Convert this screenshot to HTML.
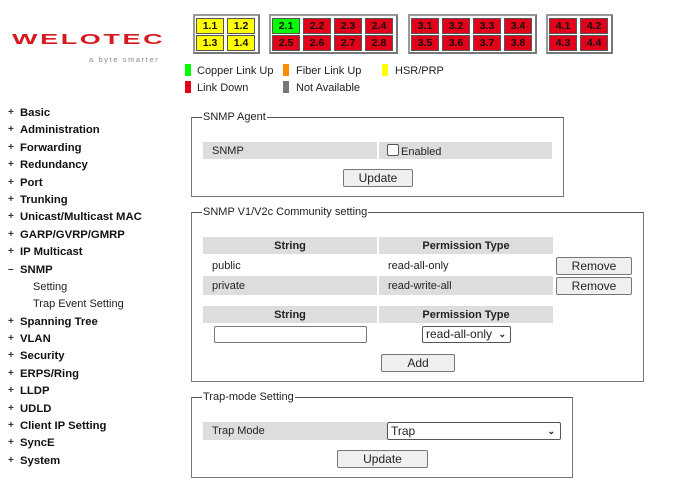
<!DOCTYPE html><html><head><style>
body{margin:0;width:680px;height:486px;background:#fff;font-family:"Liberation Sans",Arial,sans-serif;font-size:11px;color:#222;position:relative;overflow:hidden}
.a{position:absolute}
.grp{position:absolute;border:2px solid #999;border-right-color:#777;border-bottom-color:#777;background:#fff;height:36px;top:14px}
.c{position:absolute;width:26px;height:14px;border:1px solid #555;font-size:10.5px;font-weight:bold;text-align:center;line-height:14px;color:#111}
.y{background:#ffff00}.r{background:#e2001a}.g{background:#00ff00}
.sq{position:absolute;width:6px;height:12px}
.nav{position:absolute;left:0;font-weight:bold;font-size:11.3px;color:#111;margin-top:2px}
.nav span{position:absolute;left:8px;color:#333;font-size:10px}
.nav b{position:absolute;left:20px;white-space:nowrap}
fieldset{position:absolute;margin:0;padding:0;border:1px solid #777;border-top-color:#555}
legend{position:absolute;top:-7px;left:10px;background:#fff;padding:0 1px;font-size:11px;line-height:13px}
.gray{position:absolute;background:#ddd}
.btn{position:absolute;border:1px solid #777;border-radius:2px;background:#efefef;text-align:center;font-size:12px;box-sizing:border-box}
.sel{position:absolute;border:1px solid #555;border-radius:2px;background:#fff;font-size:12px;box-sizing:border-box;padding-left:3px}
</style></head><body>
<div class="a" style="left:12px;top:31px;font-size:27px;font-weight:bold;color:#d71920;letter-spacing:2.6px;transform:scaleY(0.55);transform-origin:0 0;">WELOTEC</div>
<div class="a" style="left:89px;top:55px;font-size:7.5px;color:#888;letter-spacing:1.6px">a byte smarter</div>

<div class="grp" style="left:193px;width:63px"></div>
<div class="c y" style="left:196px;top:18px">1.1</div><div class="c y" style="left:227px;top:18px">1.2</div>
<div class="c y" style="left:196px;top:35px">1.3</div><div class="c y" style="left:227px;top:35px">1.4</div>
<div class="grp" style="left:269px;width:125px"></div>
<div class="c g" style="left:272px;top:18px">2.1</div><div class="c r" style="left:303px;top:18px">2.2</div><div class="c r" style="left:334px;top:18px">2.3</div><div class="c r" style="left:365px;top:18px">2.4</div>
<div class="c r" style="left:272px;top:35px">2.5</div><div class="c r" style="left:303px;top:35px">2.6</div><div class="c r" style="left:334px;top:35px">2.7</div><div class="c r" style="left:365px;top:35px">2.8</div>
<div class="grp" style="left:408px;width:125px"></div>
<div class="c r" style="left:411px;top:18px">3.1</div><div class="c r" style="left:442px;top:18px">3.2</div><div class="c r" style="left:473px;top:18px">3.3</div><div class="c r" style="left:504px;top:18px">3.4</div>
<div class="c r" style="left:411px;top:35px">3.5</div><div class="c r" style="left:442px;top:35px">3.6</div><div class="c r" style="left:473px;top:35px">3.7</div><div class="c r" style="left:504px;top:35px">3.8</div>
<div class="grp" style="left:546px;width:63px"></div>
<div class="c r" style="left:549px;top:18px">4.1</div><div class="c r" style="left:580px;top:18px">4.2</div>
<div class="c r" style="left:549px;top:35px">4.3</div><div class="c r" style="left:580px;top:35px">4.4</div>

<div class="sq" style="left:185px;top:64px;background:#00ff00"></div><div class="a" style="left:197px;top:65px">Copper Link Up</div>
<div class="sq" style="left:185px;top:81px;background:#e2001a"></div><div class="a" style="left:197px;top:82px">Link Down</div>
<div class="sq" style="left:283px;top:64px;background:#ff8c00"></div><div class="a" style="left:296px;top:65px">Fiber Link Up</div>
<div class="sq" style="left:283px;top:81px;background:#777"></div><div class="a" style="left:296px;top:82px">Not Available</div>
<div class="sq" style="left:382px;top:64px;background:#ffff00"></div><div class="a" style="left:395px;top:65px">HSR/PRP</div>

<div class="nav" style="top:105px"><span>+</span><b>Basic</b></div>
<div class="nav" style="top:122px"><span>+</span><b>Administration</b></div>
<div class="nav" style="top:140px"><span>+</span><b>Forwarding</b></div>
<div class="nav" style="top:157px"><span>+</span><b>Redundancy</b></div>
<div class="nav" style="top:175px"><span>+</span><b>Port</b></div>
<div class="nav" style="top:192px"><span>+</span><b>Trunking</b></div>
<div class="nav" style="top:209px"><span>+</span><b>Unicast/Multicast MAC</b></div>
<div class="nav" style="top:227px"><span>+</span><b>GARP/GVRP/GMRP</b></div>
<div class="nav" style="top:244px"><span>+</span><b>IP Multicast</b></div>
<div class="nav" style="top:262px"><span>–</span><b>SNMP</b></div>
<div class="a" style="left:33px;top:281px;color:#222">Setting</div>
<div class="a" style="left:33px;top:298px;color:#222">Trap Event Setting</div>
<div class="nav" style="top:314px"><span>+</span><b>Spanning Tree</b></div>
<div class="nav" style="top:331px"><span>+</span><b>VLAN</b></div>
<div class="nav" style="top:348px"><span>+</span><b>Security</b></div>
<div class="nav" style="top:366px"><span>+</span><b>ERPS/Ring</b></div>
<div class="nav" style="top:383px"><span>+</span><b>LLDP</b></div>
<div class="nav" style="top:401px"><span>+</span><b>UDLD</b></div>
<div class="nav" style="top:418px"><span>+</span><b>Client IP Setting</b></div>
<div class="nav" style="top:435px"><span>+</span><b>SyncE</b></div>
<div class="nav" style="top:453px"><span>+</span><b>System</b></div>

<fieldset style="left:191px;top:117px;width:371px;height:78px"><legend>SNMP Agent</legend></fieldset>
<div class="gray" style="left:203px;top:142px;width:174px;height:17px"></div><div class="gray" style="left:379px;top:142px;width:173px;height:17px"></div>
<div class="a" style="left:212px;top:145px">SNMP</div>
<div class="a" style="left:387px;top:144px;width:10px;height:10px;border:1px solid #555;border-radius:2px;background:#fff"></div>
<div class="a" style="left:401px;top:146px">Enabled</div>
<div class="btn" style="left:343px;top:169px;width:70px;height:18px;line-height:16px">Update</div>

<fieldset style="left:191px;top:212px;width:451px;height:168px"><legend>SNMP V1/V2c Community setting</legend></fieldset>
<div class="gray" style="left:203px;top:237px;width:174px;height:17px"></div><div class="gray" style="left:379px;top:237px;width:174px;height:17px"></div>
<div class="a" style="left:203px;top:240px;width:174px;text-align:center;font-weight:bold">String</div>
<div class="a" style="left:379px;top:240px;width:174px;text-align:center;font-weight:bold">Permission Type</div>
<div class="a" style="left:212px;top:260px">public</div><div class="a" style="left:388px;top:260px">read-all-only</div>
<div class="gray" style="left:203px;top:276px;width:174px;height:19px"></div><div class="gray" style="left:379px;top:276px;width:174px;height:19px"></div>
<div class="a" style="left:212px;top:280px">private</div><div class="a" style="left:388px;top:280px">read-write-all</div>
<div class="btn" style="left:556px;top:257px;width:76px;height:18px;line-height:16px">Remove</div>
<div class="btn" style="left:556px;top:277px;width:76px;height:18px;line-height:16px">Remove</div>
<div class="gray" style="left:203px;top:306px;width:174px;height:17px"></div><div class="gray" style="left:379px;top:306px;width:174px;height:17px"></div>
<div class="a" style="left:203px;top:309px;width:174px;text-align:center;font-weight:bold">String</div>
<div class="a" style="left:379px;top:309px;width:174px;text-align:center;font-weight:bold">Permission Type</div>
<div class="a" style="left:214px;top:326px;width:153px;height:17px;border:1px solid #777;border-radius:2px;box-sizing:border-box"></div>
<div class="sel" style="left:422px;top:326px;width:89px;height:17px;line-height:15px">read-all-only <span style="position:absolute;right:4px;font-size:9px;font-weight:bold">&#8964;</span></div>
<div class="btn" style="left:381px;top:354px;width:74px;height:18px;line-height:16px">Add</div>

<fieldset style="left:191px;top:397px;width:380px;height:79px"><legend>Trap-mode Setting</legend></fieldset>
<div class="gray" style="left:203px;top:422px;width:184px;height:18px"></div>
<div class="a" style="left:212px;top:425px">Trap Mode</div>
<div class="sel" style="left:387px;top:422px;width:174px;height:18px;line-height:16px">Trap<span style="position:absolute;right:5px;font-size:9px;font-weight:bold">&#8964;</span></div>
<div class="btn" style="left:337px;top:450px;width:91px;height:18px;line-height:16px">Update</div>
</body></html>
